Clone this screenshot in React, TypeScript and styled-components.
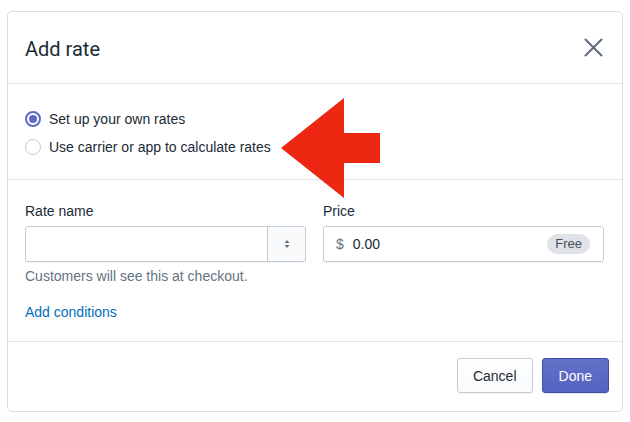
import styled, { createGlobalStyle } from "styled-components";

const GlobalStyle = createGlobalStyle`
  html, body {
    margin: 0;
    padding: 0;
    background: #ffffff;
  }
  body {
    font-family: "Liberation Sans", Arial, sans-serif;
    color: #212b36;
  }
`;

const Page = styled.div`
  padding: 11px 7px 10px 7px;
`;

const Card = styled.div`
  position: relative;
  height: 401px;
  box-sizing: border-box;
  border: 1px solid #d9dde2;
  border-radius: 5px;
  background: #fff;
  display: flex;
  flex-direction: column;
`;

const Header = styled.div`
  height: 71px;
  display: flex;
  align-items: center;
  justify-content: space-between;
  padding: 0 18px 0 17px;
  border-bottom: 1px solid #e1e4e8;
`;

const Title = styled.h2`
  margin: 0;
  font-family: Roboto, "Liberation Sans", sans-serif;
  font-weight: 400;
  font-size: 20px;
  color: #212b36;
  padding-top: 2px;
`;

const CloseButton = styled.button`
  border: 0;
  background: none;
  padding: 0;
  width: 22px;
  height: 22px;
  display: flex;
  align-items: center;
  justify-content: center;
  cursor: pointer;
`;

const Section = styled.div`
  padding: 0 18px 0 17px;
  border-bottom: 1px solid #e1e4e8;
`;

const RadioSection = styled(Section)`
  height: 96px;
  display: flex;
  flex-direction: column;
  justify-content: center;
  gap: 10px;
  padding-top: 2px;
  box-sizing: border-box;
`;

const RadioRow = styled.label`
  display: flex;
  align-items: center;
  gap: 8px;
  font-size: 14px;
  height: 18px;
`;

const RadioCircle = styled.span<{ $checked?: boolean }>`
  width: 16px;
  height: 16px;
  box-sizing: border-box;
  border-radius: 50%;
  border: ${({ $checked }) =>
    $checked ? "2px solid #5c6ac4" : "1px solid #c4cdd5"};
  background: #fff;
  display: flex;
  align-items: center;
  justify-content: center;
  &::after {
    content: "";
    display: ${({ $checked }) => ($checked ? "block" : "none")};
    width: 8px;
    height: 8px;
    border-radius: 50%;
    background: #5c6ac4;
  }
`;

const FormSection = styled(Section)`
  height: 162px;
  box-sizing: border-box;
  padding-top: 23px;
`;

const FieldGrid = styled.div`
  display: grid;
  grid-template-columns: 1fr 1fr;
  gap: 17px;
`;

const Field = styled.div`
  display: flex;
  flex-direction: column;
`;

const Label = styled.div`
  font-size: 14px;
  line-height: 16px;
  margin-bottom: 7px;
`;

const InputBox = styled.div`
  height: 36px;
  box-sizing: border-box;
  border: 1px solid #c4cdd5;
  border-radius: 3px;
  display: flex;
  align-items: center;
  background: #fff;
  box-shadow: 0 1px 0 rgba(22, 29, 37, 0.05);
`;

const TextInput = styled.input`
  flex: 1;
  height: 100%;
  border: 0;
  outline: none;
  background: transparent;
  padding: 0 12px;
  font: inherit;
  font-size: 14px;
`;

const SelectPart = styled.div`
  width: 37px;
  height: 100%;
  border-left: 1px solid #c4cdd5;
  background: #f9fafb;
  display: flex;
  align-items: center;
  justify-content: center;
  border-radius: 0 3px 3px 0;
`;

const Prefix = styled.span`
  color: #637381;
  font-size: 14px;
  padding-left: 12px;
`;

const PriceValue = styled.span`
  flex: 1;
  font-size: 14px;
  padding-left: 9px;
`;

const Badge = styled.span`
  background: #dfe3e8;
  color: #454f5b;
  font-size: 13px;
  border-radius: 10px;
  padding: 2px 8px 3px;
  margin-right: 13px;
`;

const HelpText = styled.div`
  color: #637381;
  font-size: 14px;
  margin-top: 6px;
`;

const LinkText = styled.a`
  display: inline-block;
  color: #006fbb;
  font-size: 14px;
  margin-top: 20px;
  text-decoration: none;
  cursor: pointer;
`;

const Footer = styled.div`
  flex: 1;
  display: flex;
  justify-content: flex-end;
  align-items: center;
  gap: 9px;
  padding: 0 13px 2px 0;
`;

const Button = styled.button<{ $primary?: boolean }>`
  height: 35px;
  border-radius: 3px;
  font-family: "Liberation Sans", Arial, sans-serif;
  font-size: 14px;
  padding: 0 ${({ $primary }) => ($primary ? "16px" : "15px")};
  cursor: pointer;
  border: 1px solid ${({ $primary }) => ($primary ? "#3f4eae" : "#c4cdd5")};
  color: ${({ $primary }) => ($primary ? "#fff" : "#212b36")};
  background: ${({ $primary }) =>
    $primary
      ? "linear-gradient(180deg, #6371c7, #5563c1)"
      : "linear-gradient(180deg, #fff, #f9fafb)"};
  box-shadow: ${({ $primary }) =>
    $primary
      ? "0 1px 0 rgba(22,29,37,0.1)"
      : "0 1px 0 rgba(22,29,37,0.05)"};
`;

const ArrowOverlay = styled.svg`
  position: absolute;
  left: 272px;
  top: 85px;
  pointer-events: none;
`;

const App = () => {
  return (
    <>
      <GlobalStyle />
      <Page>
        <Card>
          <Header>
            <Title>Add rate</Title>
            <CloseButton aria-label="Close">
              <svg width="19" height="19" viewBox="0 0 19 19">
                <path
                  d="M1.5 1.5 L17.5 17.5 M17.5 1.5 L1.5 17.5"
                  stroke="#5f6b78"
                  strokeWidth="2"
                  strokeLinecap="round"
                />
              </svg>
            </CloseButton>
          </Header>
          <RadioSection>
            <RadioRow>
              <RadioCircle $checked />
              Set up your own rates
            </RadioRow>
            <RadioRow>
              <RadioCircle />
              Use carrier or app to calculate rates
            </RadioRow>
          </RadioSection>
          <FormSection>
            <FieldGrid>
              <Field>
                <Label>Rate name</Label>
                <InputBox>
                  <TextInput />
                  <SelectPart>
                    <svg width="8" height="12" viewBox="0 0 8 12">
                      <path d="M4 2 L6.5 5 H1.5 Z" fill="#637381" />
                      <path d="M4 10 L6.5 7 H1.5 Z" fill="#637381" />
                    </svg>
                  </SelectPart>
                </InputBox>
                <HelpText>Customers will see this at checkout.</HelpText>
              </Field>
              <Field>
                <Label>Price</Label>
                <InputBox>
                  <Prefix>$</Prefix>
                  <PriceValue>0.00</PriceValue>
                  <Badge>Free</Badge>
                </InputBox>
              </Field>
            </FieldGrid>
            <LinkText>Add conditions</LinkText>
          </FormSection>
          <Footer>
            <Button>Cancel</Button>
            <Button $primary>Done</Button>
          </Footer>
          <ArrowOverlay width="110" height="102" viewBox="0 0 110 102">
            <polygon
              points="1,51 64,1 64,36 100,36 100,66 64,66 64,101"
              fill="#ee2712"
            />
          </ArrowOverlay>
        </Card>
      </Page>
    </>
  );
};

export default App;
